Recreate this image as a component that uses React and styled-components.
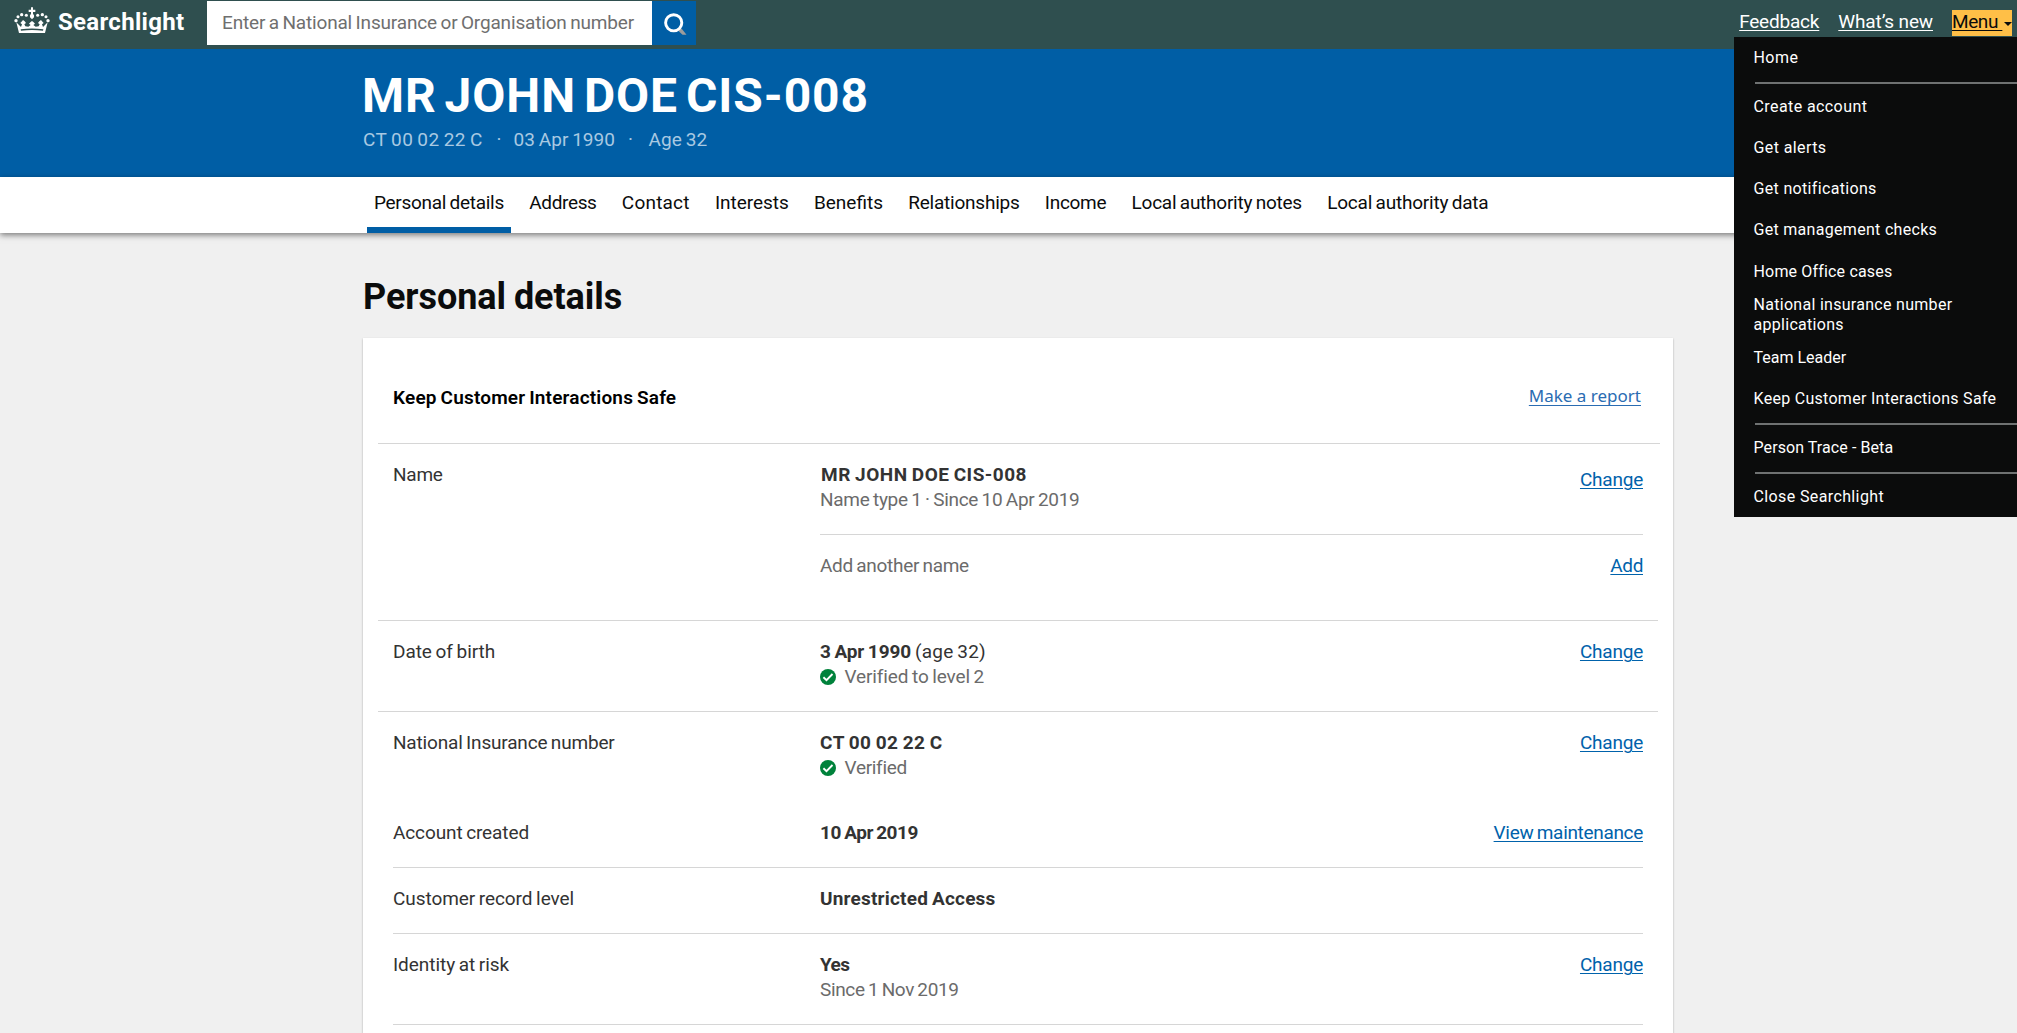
import React from "react";
import styled, { createGlobalStyle, css } from "styled-components";

const color = {
  header: "#2f4f4f",
  blue: "#005ea5",
  link: "#0062ab",
  page: "#f0f0f0",
  rule: "#d6d6d6",
  ink: "#0b0c0c",
  text: "#333333",
  muted: "#6b6b6b",
  focus: "#ffbf47",
};

const GlobalStyle = createGlobalStyle`
  *, *::before, *::after { box-sizing: border-box; }
  body {
    margin: 0;
    height: 100vh;
    overflow: hidden;
    background: ${color.page};
    color: ${color.text};
    font-family: Roboto, "Liberation Sans", sans-serif;
    font-size: 19px;
    line-height: 25px;
    word-spacing: -1px;
  }
  h1, h2, p, ul, dl, dt, dd { margin: 0; padding: 0; }
`;

/* letter spacing that brings the text to the width of the brand typeface */
const tracked = css`
  letter-spacing: ${(p) => p.$track || 0}px;
`;

const Header = styled.header`
  display: flex;
  align-items: flex-start;
  height: 49px;
  padding: 1px 5px 0 14px;
  background: ${color.header};
`;

const Brand = styled.div`
  display: flex;
  width: 193px;
  height: 44px;
  color: #fff;
`;

const Crown = styled.svg`
  width: 36px;
  height: 26px;
  margin: 6px 8px 0 0;
  fill: #fff;
`;

const BrandName = styled.span`
  font-size: 24px;
  font-weight: 700;
  line-height: 43px;
  ${tracked}
`;

const Search = styled.form`
  display: flex;
  height: 44px;
`;

const SearchInput = styled.input`
  width: 445px;
  height: 44px;
  padding: 0 0 2px 15px;
  border: 0;
  background: #fff;
  font: inherit;
  letter-spacing: -0.17px;
  word-spacing: -1px;
  &::placeholder {
    color: #6f6f6f;
    opacity: 1;
  }
`;

const SearchButton = styled.button`
  width: 44px;
  height: 44px;
  padding: 0;
  border: 0;
  background: ${color.blue};
  svg {
    display: block;
  }
`;

const HeaderLinks = styled.nav`
  position: relative;
  display: flex;
  margin: 9px 0 0 auto;
  line-height: 23px;
  word-spacing: 0;
`;

const HeaderLink = styled.a`
  margin-right: ${(p) => p.$gap}px;
  color: #fff;
  white-space: nowrap;
  text-decoration: underline;
  text-decoration-thickness: 1px;
  text-underline-offset: 2px;
  text-decoration-skip-ink: none;
  ${tracked}
`;

const MenuButton = styled.button`
  display: flex;
  align-items: flex-start;
  width: 60px;
  height: 26px;
  padding: 0;
  border: 0;
  background: ${color.focus};
  color: ${color.ink};
  font: inherit;
  white-space: pre;
  ${tracked}
  span {
    text-decoration: underline;
    text-decoration-thickness: 1px;
    text-underline-offset: 2px;
  }
  svg {
    margin: 12px 0 0 auto;
  }
`;

const Dropdown = styled.div`
  position: absolute;
  top: 27px;
  right: -5px;
  z-index: 2;
  width: 283px;
  height: 480px;
  padding-left: 19.5px;
  background: ${color.ink};
`;

const MenuItem = styled.a`
  display: flex;
  align-items: center;
  min-height: 41.2px;
  padding: 3px 0;
  color: #fff;
  font-size: 16px;
  line-height: 19.7px;
  white-space: pre-line;
  ${tracked}
`;

const MenuRule = styled.div`
  height: 2px;
  margin: ${(p) => p.$above}px 0 2px 1.5px;
  background: #6f7272;
`;

const Banner = styled.section`
  height: 128px;
  padding: 19px 0 0 362px;
  background: ${color.blue};
`;

const PersonName = styled.h1`
  color: #fff;
  font-size: 48px;
  line-height: 56px;
  word-spacing: -5px;
  ${tracked}
`;

const PersonFacts = styled.p`
  display: flex;
  padding: 3px 0 0 1px;
  color: #a9c9e2;
`;

const Fact = styled.span`
  width: ${(p) => p.$width}px;
  white-space: nowrap;
  ${tracked}
`;

const Tabs = styled.nav`
  position: relative;
  display: flex;
  gap: 11.3px;
  height: 56px;
  padding-left: 367px;
  background: #fff;
  box-shadow: 0 2px 6px rgba(0, 0, 0, 0.5);
`;

const Tab = styled.a`
  height: 56px;
  padding: 1px 7px 0;
  border-bottom: 6px solid ${(p) => (p.$active ? color.blue : "transparent")};
  color: ${color.ink};
  line-height: 49px;
  white-space: nowrap;
  ${tracked}
`;

const Main = styled.main`
  width: 1310px;
  margin-left: 363px;
  padding-top: 42px;
`;

const Heading = styled.h2`
  margin-bottom: 19px;
  color: ${color.ink};
  font-size: 36px;
  line-height: 44px;
  ${tracked}
`;

const Card = styled.div`
  height: 695px;
  background: #fff;
  box-shadow: 0 1px 2px rgba(0, 0, 0, 0.3);
`;

const SafetyRow = styled.div`
  display: flex;
  justify-content: space-between;
  height: 106px;
  margin: 0 13px 0 15px;
  padding: 47px 19px 0 15px;
  border-bottom: 1px solid ${color.rule};
`;

const SafetyTitle = styled.span`
  color: #000;
  font-weight: 600;
  ${tracked}
`;

const ReportLink = styled.a`
  color: #2a6cb2;
  font-family: "Noto Sans", "Open Sans", sans-serif;
  font-size: 17px;
  line-height: 22px;
  word-spacing: 0;
  text-decoration: underline;
  text-decoration-thickness: 1px;
  text-underline-offset: 3px;
  text-decoration-skip-ink: none;
`;

const Group = styled.dl`
  margin: 0 15px;
  border-bottom: ${(p) => (p.$ruled ? `1px solid ${color.rule}` : "0")};
`;

const Row = styled.div`
  display: flex;
  margin: 0 15px;
  padding: ${(p) => p.$pad};
  border-bottom: ${(p) => (p.$ruled ? `1px solid ${color.rule}` : "0")};
`;

const Term = styled.dt`
  flex: 0 0 427px;
  ${tracked}
`;

const Entries = styled.dd`
  flex: 1;
`;

const Entry = styled.div`
  display: flex;
  justify-content: space-between;
  padding: ${(p) => p.$pad || 0};
  border-bottom: ${(p) => (p.$ruled ? `1px solid ${color.rule}` : "0")};
`;

const Value = styled.span`
  color: ${(p) => (p.$muted ? color.muted : color.text)};
  font-weight: ${(p) => (p.$strong ? 700 : 400)};
  ${tracked}
`;

const Line = styled.div`
  display: flex;
  align-items: center;
  height: 25px;
  gap: ${(p) => p.$gap || 0}px;
  padding-left: ${(p) => p.$indent || 0}px;
  white-space: nowrap;
`;

const Tick = styled.svg`
  width: 16px;
  height: 16px;
  margin-top: 1px;
`;

const Action = styled.a`
  align-self: flex-start;
  margin-top: ${(p) => p.$drop || 0}px;
  color: ${color.link};
  white-space: nowrap;
  text-decoration: underline;
  text-decoration-thickness: 1px;
  text-underline-offset: 2px;
  ${tracked}
`;

function CrownIcon() {
  const balls = [
    [47, 61, 5],
    [53, 49, 4.6],
    [64, 43, 5],
    [78, 45, 4.6],
  ];
  return (
    <Crown viewBox="41 20 108 78" aria-hidden="true">
      {balls.map(([x, y, r]) => (
        <g key={x}>
          <circle cx={x} cy={y} r={r} />
          <circle cx={190 - x} cy={y} r={r} />
        </g>
      ))}
      <path d="M92 21h6v7h7v7h-7v5q5 5 3 11l-6 6-6-6q-2-6 3-11v-5h-7v-7h7z" />
      <path
        fillRule="evenodd"
        d="M48 66l8 8 6 6 3-8-5-4 5-5 3-4 5 4 4 5-5 4 3 6 9 1 7-5-5-4 4-4 5-4 5 4 4 4-5 4 7 5 9-1 3-6-5-4 4-5 5-4 3 4 5 5-5 4 3 8 6-6 8-8-8 32H56zM61 87l1 4q33-4 66 0l1-4q-34-5-68 0z"
      />
    </Crown>
  );
}

function VerifiedTick() {
  return (
    <Tick viewBox="0 0 16 16" aria-hidden="true">
      <circle cx="8" cy="8" r="8" fill="#00823b" />
      <path d="M3.4 8.2l3.1 3 6-6.2" fill="none" stroke="#fff" strokeWidth="1.9" />
    </Tick>
  );
}

const change = { label: "Change", track: -0.23 };

const tabs = [
  ["Personal details", -0.29],
  ["Address", -0.35],
  ["Contact", 0.2],
  ["Interests", -0.05],
  ["Benefits", 0],
  ["Relationships", -0.23],
  ["Income", -0.3],
  ["Local authority notes", -0.24],
  ["Local authority data", -0.22],
];

const menu = [
  [["Home", 0.45]],
  [
    ["Create account", 0.41],
    ["Get alerts", 0.4],
    ["Get notifications", 0.33],
    ["Get management checks", 0.3],
    ["Home Office cases", 0.17],
    ["National insurance number\napplications", 0.29],
    ["Team Leader", 0],
    ["Keep Customer Interactions Safe", 0.29],
  ],
  [["Person Trace - Beta", 0.08]],
  [["Close Searchlight", 0.38]],
];

function Link({ action, drop }) {
  return (
    <Action $track={action.track} $drop={drop}>
      {action.label}
    </Action>
  );
}

export default function App() {
  return (
    <>
      <GlobalStyle />
      <Header>
        <Brand>
          <CrownIcon />
          <BrandName $track={0.3}>Searchlight</BrandName>
        </Brand>
        <Search>
          <SearchInput placeholder="Enter a National Insurance or Organisation number" />
          <SearchButton type="button" aria-label="Search">
            <svg width="44" height="44" viewBox="0 0 44 44">
              <path d="M26 29.5l3.5-2 5 6.3h-4z" fill="#9c9c9c" />
              <circle cx="21.7" cy="21.8" r="8.1" fill="none" stroke="#fff" strokeWidth="2.9" />
            </svg>
          </SearchButton>
        </Search>
        <HeaderLinks>
          <HeaderLink $track={-0.2} $gap={19}>Feedback</HeaderLink>
          <HeaderLink $track={-0.13} $gap={19}>What’s new</HeaderLink>
          <MenuButton type="button" $track={-0.4}>
            <span>{"Menu "}</span>
            <svg width="8" height="4" viewBox="0 0 8 4">
              <path d="M0 0h8L4 4z" fill={color.ink} />
            </svg>
          </MenuButton>
          <Dropdown>
            {menu.map((group, i) => (
              <React.Fragment key={group[0][0]}>
                {i > 0 && <MenuRule $above={i === 1 ? 4 : 3.5} />}
                {group.map(([label, track]) => (
                  <MenuItem key={label} $track={track}>
                    {label}
                  </MenuItem>
                ))}
              </React.Fragment>
            ))}
          </Dropdown>
        </HeaderLinks>
      </Header>

      <Banner>
        <PersonName $track={0.95}>MR JOHN DOE CIS-008</PersonName>
        <PersonFacts>
          <Fact $width={133.5} $track={0.42}>CT 00 02 22 C</Fact>
          <Fact $width={17}>·</Fact>
          <Fact $width={114.5} $track={0.05}>03 Apr 1990</Fact>
          <Fact $width={20.5}>·</Fact>
          <Fact $width={60} $track={0.1}>Age 32</Fact>
        </PersonFacts>
      </Banner>

      <Tabs>
        {tabs.map(([label, track], i) => (
          <Tab key={label} $track={track} $active={i === 0}>
            {label}
          </Tab>
        ))}
      </Tabs>

      <Main>
        <Heading $track={-0.05}>Personal details</Heading>
        <Card>
          <SafetyRow>
            <SafetyTitle $track={0.18}>Keep Customer Interactions Safe</SafetyTitle>
            <ReportLink>Make a report</ReportLink>
          </SafetyRow>

          <Group $ruled>
            <Row $pad="18px 0 42px">
              <Term $track={-0.25}>Name</Term>
              <Entries>
                <Entry $ruled $pad="0 0 22px">
                  <div>
                    <Line $indent={1}>
                      <Value $strong $track={0.5}>MR JOHN DOE CIS-008</Value>
                    </Line>
                    <Line>
                      <Value $muted $track={-0.28}>Name type 1 · Since 10 Apr 2019</Value>
                    </Line>
                  </div>
                  <Link action={change} drop={5} />
                </Entry>
                <Entry $pad="18px 0 0">
                  <Value $muted $track={-0.3}>Add another name</Value>
                  <Link action={{ label: "Add", track: -0.4 }} />
                </Entry>
              </Entries>
            </Row>
          </Group>

          <Group $ruled>
            <Row $pad="18px 0 22px">
              <Term $track={-0.05}>Date of birth</Term>
              <Entries>
                <Entry>
                  <div>
                    <Line $gap={4}>
                      <Value $strong $track={-0.1}>3 Apr 1990</Value>
                      <Value $track={0.2}>(age 32)</Value>
                    </Line>
                    <Line $gap={8.5}>
                      <VerifiedTick />
                      <Value $muted $track={-0.12}>Verified to level 2</Value>
                    </Line>
                  </div>
                  <Link action={change} />
                </Entry>
              </Entries>
            </Row>
          </Group>

          <Group>
            <Row $pad="18px 0 40px">
              <Term $track={-0.18}>National Insurance number</Term>
              <Entries>
                <Entry>
                  <div>
                    <Line>
                      <Value $strong $track={0.5}>CT 00 02 22 C</Value>
                    </Line>
                    <Line $gap={8.5}>
                      <VerifiedTick />
                      <Value $muted $track={-0.3}>Verified</Value>
                    </Line>
                  </div>
                  <Link action={change} />
                </Entry>
              </Entries>
            </Row>
            <Row $ruled $pad="0 0 22px">
              <Term $track={-0.11}>Account created</Term>
              <Entries>
                <Entry>
                  <Value $strong $track={-0.46}>10 Apr 2019</Value>
                  <Link action={{ label: "View maintenance", track: -0.32 }} />
                </Entry>
              </Entries>
            </Row>
            <Row $ruled $pad="18px 0 22px">
              <Term $track={-0.07}>Customer record level</Term>
              <Entries>
                <Entry>
                  <Value $strong $track={0.2}>Unrestricted Access</Value>
                </Entry>
              </Entries>
            </Row>
            <Row $ruled $pad="18px 0 22px">
              <Term $track={-0.05}>Identity at risk</Term>
              <Entries>
                <Entry>
                  <div>
                    <Line>
                      <Value $strong $track={-0.55}>Yes</Value>
                    </Line>
                    <Line>
                      <Value $muted $track={-0.36}>Since 1 Nov 2019</Value>
                    </Line>
                  </div>
                  <Link action={change} />
                </Entry>
              </Entries>
            </Row>
          </Group>
        </Card>
      </Main>
    </>
  );
}
